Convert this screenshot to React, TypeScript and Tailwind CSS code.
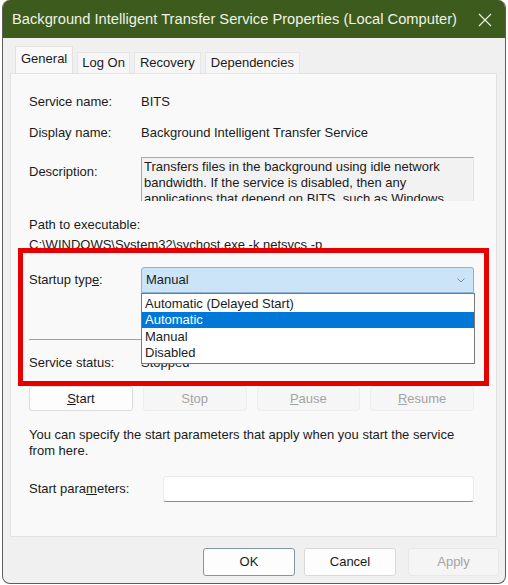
import React from "react";

function Row({ label, children, className = "" }: { label: React.ReactNode; children?: React.ReactNode; className?: string }) {
  return (
    <div className={`flex items-center h-[20px] ${className}`}>
      <div className="w-[112px] shrink-0">{label}</div>
      <div className="flex-1">{children}</div>
    </div>
  );
}

export default function App() {
  return (
    <div className="w-[508px] h-[585px] bg-white overflow-hidden font-['Liberation_Sans',Arial,sans-serif] text-[13px] text-[#1b1b1b]">
      <div className="ml-[2px] w-[504px] h-[584px] flex flex-col rounded-[8px] border-l border-r border-b border-[#5c5c5c] overflow-hidden bg-[#f0f0f0]">
        {/* Title bar */}
        <div className="h-[38px] shrink-0 bg-[#3e5b1e] flex items-center pl-[9px] pr-[9px] pt-[1px]">
          <div className="flex-1 text-[14.7px] text-[#eef2e8] whitespace-nowrap">
            Background Intelligent Transfer Service Properties (Local Computer)
          </div>
          <svg width="14" height="14" viewBox="0 0 14 14" className="mr-[4px]">
            <path d="M1 1 L13 13 M13 1 L1 13" stroke="#e8eee0" strokeWidth="1.2" fill="none" />
          </svg>
        </div>

        {/* Tabs */}
        <div className="h-[35px] shrink-0 flex items-end pl-[12px] gap-[4px] relative z-10">
          <div className="h-[27px] px-[5px] bg-[#f9f9f9] border border-b-0 border-[#e2e2e2] flex items-center pb-[2px]">General</div>
          <div className="h-[22px] px-[4px] bg-[#f6f6f6] border border-[#e6e6e6] flex items-center -mb-[1px]">Log On</div>
          <div className="h-[22px] px-[5px] bg-[#f6f6f6] border border-[#e6e6e6] flex items-center -mb-[1px]">Recovery</div>
          <div className="h-[22px] px-[5px] bg-[#f6f6f6] border border-[#e6e6e6] flex items-center -mb-[1px]">Dependencies</div>
        </div>

        {/* Panel */}
        <div className="ml-[7px] w-[487px] h-[464px] shrink-0 bg-[#f9f9f9] border border-[#e2e2e2] relative pl-[18px] pr-[22px] pt-[18px] flex flex-col">
          <Row label="Service name:">BITS</Row>
          <Row label="Display name:" className="mt-[11px]">Background Intelligent Transfer Service</Row>

          <div className="mt-[14px] flex items-start h-[44px]">
            <div className="w-[112px] shrink-0 pt-[5px] leading-[20px]">Description:</div>
            <div className="flex-1 h-[44px] overflow-hidden bg-[#f2f2f2] border-t border-l border-[#a8a8a8] border-r border-r-[#e4e4e4] pl-[2px] pr-[18px] pt-[1px] leading-[16px]">
              Transfers files in the background using idle network bandwidth. If the service is disabled, then any applications that depend on BITS, such as Windows Update or MSN Explorer, will be unable to automatically download programs and other information.
            </div>
          </div>

          <div className="mt-[14px] h-[20px] flex items-center">Path to executable:</div>
          <div className="h-[20px] flex items-center whitespace-nowrap">{"C:\\WINDOWS\\System32\\svchost.exe -k netsvcs -p"}</div>

          <div className="mt-[12px] h-[26px] flex items-center">
            <div className="w-[112px] shrink-0">
              Startup typ<span className="underline">e</span>:
            </div>
            <div className="flex-1 h-[26px] relative">
              <div className="h-[26px] bg-[#cce4f7] border border-[#8db2d4] rounded-t-[3px] flex items-center pl-[4px] pr-[8px]">
                <span className="flex-1">Manual</span>
                <svg width="8" height="5" viewBox="0 0 8 5">
                  <path d="M0.5 0.5 L4 4 L7.5 0.5" stroke="#8a8a8a" strokeWidth="1" fill="none" />
                </svg>
              </div>
              <div className="absolute left-0 top-[26px] w-[334px] bg-white border border-[#7a7a7a] pt-[1px] pb-[2px] z-20 leading-[16px]">
                <div className="h-[17px] pl-[3px] flex items-center">Automatic (Delayed Start)</div>
                <div className="h-[16px] pl-[3px] flex items-center bg-[#0078d7] text-white">Automatic</div>
                <div className="h-[17px] pl-[3px] flex items-center">Manual</div>
                <div className="h-[16px] pl-[3px] flex items-center">Disabled</div>
              </div>
            </div>
          </div>

          <div className="mt-[46px] h-px bg-[#a0a0a0]" />

          <Row label="Service status:" className="mt-[13px]">Stopped</Row>

          <div className="mt-[13px] h-[25px] grid grid-cols-4 gap-[10px]">
            <div className="bg-[#fdfdfd] border border-[#dcdcdc] rounded-[3px] flex items-center justify-center">
              <span><span className="underline">S</span>tart</span>
            </div>
            <div className="bg-[#f6f6f6] border border-[#eeeeee] rounded-[3px] flex items-center justify-center text-[#a4a4a4]">
              <span>S<span className="underline">t</span>op</span>
            </div>
            <div className="bg-[#f6f6f6] border border-[#eeeeee] rounded-[3px] flex items-center justify-center text-[#a4a4a4]">
              <span><span className="underline">P</span>ause</span>
            </div>
            <div className="bg-[#f6f6f6] border border-[#eeeeee] rounded-[3px] flex items-center justify-center text-[#a4a4a4]">
              <span><span className="underline">R</span>esume</span>
            </div>
          </div>

          <div className="mt-[16px] leading-[16px]">
            You can specify the start parameters that apply when you start the service from here.
          </div>

          <div className="mt-[17px] h-[26px] flex items-center">
            <div className="w-[134px] shrink-0">
              Start para<span className="underline">m</span>eters:
            </div>
            <div className="flex-1 h-[26px] bg-white border border-[#ececec] border-b-[#8c8c8c] rounded-[3px]" />
          </div>

          {/* Red highlight annotation */}
          <div className="absolute left-[7px] top-[174px] w-[471px] h-[138px] border-[5px] border-[#e60000] z-30 pointer-events-none" />
        </div>

        {/* Footer */}
        <div className="flex-1 flex justify-end items-start pt-[11px] pr-[6px] gap-[9px]">
          <div className="w-[92px] h-[28px] bg-[#fdfdfd] border border-[#8195a8] rounded-[3px] flex items-center justify-center">OK</div>
          <div className="w-[92px] h-[28px] bg-[#fdfdfd] border border-[#d8d8d8] rounded-[3px] flex items-center justify-center">Cancel</div>
          <div className="w-[91px] h-[28px] ml-[3px] bg-[#f5f5f5] border border-[#e8e8e8] rounded-[3px] flex items-center justify-center text-[#a4a4a4]">Apply</div>
        </div>
      </div>
    </div>
  );
}
